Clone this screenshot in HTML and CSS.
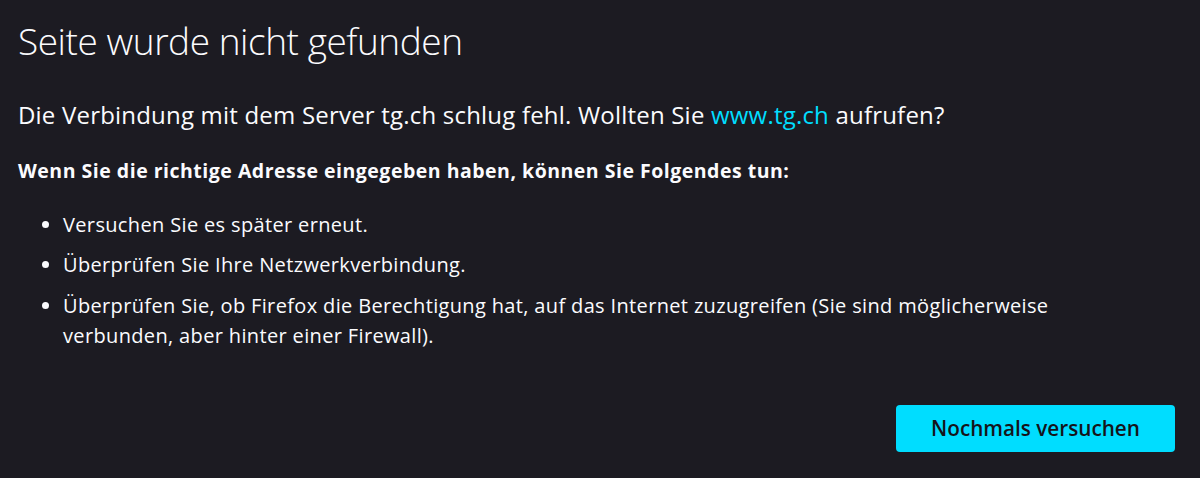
FILE: index.html
```html
<!DOCTYPE html>
<html lang="de">
<head>
    <meta charset="UTF-8">
    <meta name="viewport" content="width=device-width, initial-scale=1.0">
    <title>Seite wurde nicht gefunden</title>
    <link rel="stylesheet" href="styles.css">
</head>
<body>
    <div class="error-page">
        <h1 class="title">Seite wurde nicht gefunden</h1>

        <p class="intro">Die Verbindung mit dem Server tg.ch schlug fehl. Wollten Sie <a href="#">www.tg.ch</a> aufrufen?</p>

        <p class="hint">Wenn Sie die richtige Adresse eingegeben haben, können Sie Folgendes tun:</p>

        <ul class="tips">
            <li>Versuchen Sie es später erneut.</li>
            <li>Überprüfen Sie Ihre Netzwerkverbindung.</li>
            <li>Überprüfen Sie, ob Firefox die Berechtigung hat, auf das Internet zuzugreifen (Sie sind möglicherweise verbunden, aber hinter einer Firewall).</li>
        </ul>

        <div class="actions">
            <button type="button" class="retry">Nochmals versuchen</button>
        </div>
    </div>
</body>
</html>
```

FILE: styles.css
```css
/* Fondo oscuro como la página de error del navegador */
body, html {
    margin: 0;
    height: 100%;
    background-color: #1c1b22;
    color: #fbfbfe;
    font-family: "Open Sans", "Noto Sans", sans-serif;
}

.error-page {
    padding: 0 25px 0 18px;
}

.title {
    margin: 17px 0 0;
    font-size: 37px;
    font-weight: 300;
    line-height: 48px;
    letter-spacing: -0.45px;
}

.intro {
    margin: 34px 0 0;
    font-size: 24px;
    line-height: 32px;
    letter-spacing: 0.2px;
}

.intro a {
    color: #00ddff;
    text-decoration: none;
}

.hint {
    margin: 26.5px 0 0;
    font-size: 19.5px;
    font-weight: 700;
    line-height: 26px;
    letter-spacing: 0.5px;
}

.tips {
    margin: 26px 0 0;
    padding-left: 45px;
    font-size: 20px;
    line-height: 30px;
    letter-spacing: 0.35px;
}

.tips li {
    max-width: 1040px;
    margin-bottom: 10.5px;
}

.tips li:last-child {
    margin-bottom: 0;
}

/* Botón de reintentar alineado a la derecha */
.actions {
    display: flex;
    justify-content: flex-end;
    margin-top: 54px;
}

.retry {
    width: 279px;
    height: 47px;
    border: none;
    border-radius: 4px;
    background-color: #00ddff;
    color: #15141a;
    font-family: inherit;
    font-size: 20.7px;
    font-weight: 600;
    cursor: pointer;
}
```
